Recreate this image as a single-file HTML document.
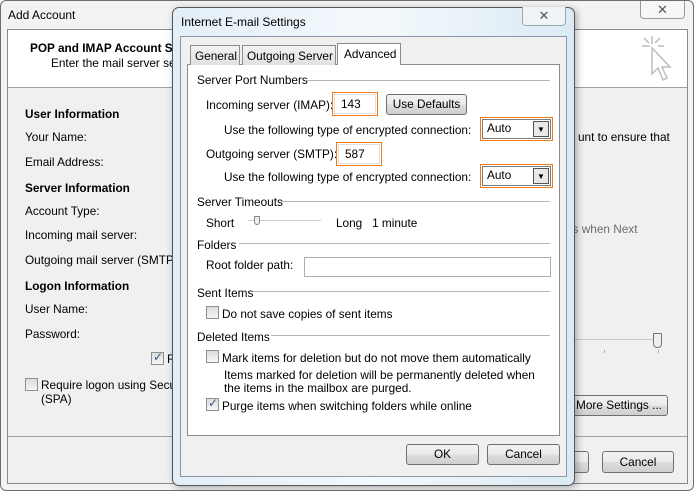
<!DOCTYPE html>
<html><head><style>
*{margin:0;padding:0;box-sizing:border-box}
body{width:694px;height:491px;overflow:hidden;background:#fff;font-family:"Liberation Sans",sans-serif;font-size:11.8px;color:#000;position:relative}
.a{position:absolute;white-space:nowrap}
.b{font-weight:bold}
.cb{position:absolute;width:13px;height:13px;border:1px solid #8e8f8f;background:linear-gradient(#dcdcdc,#f6f6f6)}
.btn{position:absolute;border:1px solid #707070;border-radius:3px;background:linear-gradient(#f2f2f2 0,#ebebeb 50%,#dddddd 51%,#cfcfcf);text-align:center}
.hr{position:absolute;height:1px;background:#b5b5b5}
.inp{position:absolute;background:#fff;border:1px solid #abadb3}
.og{position:absolute;border:1px solid #f07a1a}
.sel{position:absolute;background:#fff;border:1px solid #7a7a7a}
</style></head><body>
<div class="a" style="left:0;top:0;width:694px;height:491px;border:1px solid #6e6e6e;border-radius:6px;background:#f3f3f3"></div>
<div class="a" style="left:8px;top:8px;font-size:12px">Add Account</div>
<div class="a" style="left:640px;top:1px;width:45px;height:18px;border:1px solid #9a9a9a;border-top:none;border-radius:0 0 4px 4px;background:#f7f7f7;text-align:center;font-size:13px;color:#555;line-height:17px">✕</div>
<div class="a" style="left:7px;top:29px;width:681px;height:455px;border:1px solid #8a8a8a;background:#f0f0f0"></div>
<div class="a" style="left:8px;top:30px;width:679px;height:58px;background:#fff;border-bottom:1px solid #a0a0a0"></div>
<div class="a b" style="left:30px;top:41px">POP and IMAP Account Se</div>
<div class="a" style="left:51px;top:56px">Enter the mail server sett</div>
<svg class="a" style="left:638px;top:34px" width="36" height="50" viewBox="0 0 36 50"><g stroke="#bdbdbd" stroke-width="1.5" fill="none"><path d="M14 2v8M4 12h8M6 4l5 5M22 4l-5 5M20 12h6"/><path d="M14 14v26l6-6 5 12 4-2-5-11h8z" fill="#fff"/></g></svg>
<div class="hr" style="left:8px;top:436px;width:679px;background:#a0a0a0"></div>
<div class="a b" style="left:25px;top:107px">User Information</div>
<div class="a" style="left:25px;top:130px">Your Name:</div>
<div class="a" style="left:25px;top:155px">Email Address:</div>
<div class="a b" style="left:25px;top:181px">Server Information</div>
<div class="a" style="left:25px;top:204px">Account Type:</div>
<div class="a" style="left:25px;top:228px">Incoming mail server:</div>
<div class="a" style="left:25px;top:253px">Outgoing mail server (SMTP):</div>
<div class="a b" style="left:25px;top:279px">Logon Information</div>
<div class="a" style="left:25px;top:302px">User Name:</div>
<div class="a" style="left:25px;top:327px">Password:</div>
<div class="cb" style="left:151px;top:352px"><span style="position:absolute;left:1px;top:-3px;color:#3b4f8c;font-size:12px">✓</span></div>
<div class="a" style="left:167px;top:352px">R</div>
<div class="cb" style="left:25px;top:378px"></div>
<div class="a" style="left:41px;top:378px;line-height:14px">Require logon using Secu<br>(SPA)</div>
<div class="a" style="left:578px;top:130px">unt to ensure that</div>
<div class="a" style="left:566px;top:222px;color:#6d6d6d">gs when Next</div>
<div class="hr" style="left:575px;top:339px;width:85px;background:#c8c8c8"></div>
<div class="a" style="left:653px;top:333px;width:9px;height:15px;border:1px solid #777;border-radius:1px 1px 4px 4px;background:#eee"></div>
<div class="a" style="left:604px;top:350px;width:1px;height:3px;background:#aaa"></div>
<div class="a" style="left:658px;top:350px;width:1px;height:3px;background:#aaa"></div>
<div class="btn" style="left:570px;top:395px;width:98px;height:21px;line-height:19px">More Settings ...</div>
<div class="btn" style="left:562px;top:451px;width:27px;height:22px"></div>
<div class="btn" style="left:602px;top:451px;width:72px;height:22px;line-height:20px">Cancel</div>
<div class="a" style="left:172px;top:7px;width:403px;height:479px;border:1px solid #555;border-radius:7px;background:linear-gradient(90deg,#e3eef7,#f4f9fc 50%,#dbeaf4);box-shadow:2px 2px 8px rgba(0,0,0,.3)"></div>
<div class="a" style="left:181px;top:15px;font-size:12px">Internet E-mail Settings</div>
<div class="a" style="left:522px;top:7px;width:44px;height:19px;border:1px solid #9aa;border-top:none;border-radius:0 0 4px 4px;background:#f0f4f7;text-align:center;font-size:13px;color:#555;line-height:18px">✕</div>
<div class="a" style="left:180px;top:36px;width:387px;height:441px;border:1px solid #8a98a8;background:#f0f0f0"></div>
<div class="a" style="left:187px;top:64px;width:373px;height:372px;border:1px solid #898c95;background:#fff"></div>
<div class="a" style="left:190px;top:45px;width:50px;height:20px;border:1px solid #898c95;border-bottom:none;background:linear-gradient(#f2f2f2,#e1e1e1);padding:3px 0 0 4px">General</div>
<div class="a" style="left:242px;top:45px;width:94px;height:20px;border:1px solid #898c95;border-bottom:none;background:linear-gradient(#f2f2f2,#e1e1e1);padding:3px 0 0 4px">Outgoing Server</div>
<div class="a" style="left:337px;top:43px;width:64px;height:22px;border:1px solid #898c95;border-bottom:none;background:#fff;padding:3px 0 0 6px">Advanced</div>
<div class="a" style="left:197px;top:73px">Server Port Numbers</div><div class="hr" style="left:305px;top:80px;width:245px"></div>
<div class="a" style="left:206px;top:98px">Incoming server (IMAP):</div>
<div class="og" style="left:332px;top:92px;width:46px;height:24px"></div><div class="inp" style="left:334px;top:94px;width:42px;height:20px;padding:2px 0 0 6px;border-color:#e0e0e0">143</div>
<div class="btn" style="left:386px;top:94px;width:81px;height:21px;line-height:19px">Use Defaults</div>
<div class="a" style="left:224px;top:123px">Use the following type of encrypted connection:</div>
<div class="og" style="left:480px;top:117px;width:73px;height:24px"></div><div class="sel" style="left:482px;top:119px;width:69px;height:20px;padding:1px 0 0 4px">Auto<div class="a" style="right:1px;top:1px;width:16px;height:16px;border:1px solid #555;background:#e8e8e8;font-size:8px;text-align:center;line-height:15px">▼</div></div>
<div class="a" style="left:206px;top:147px">Outgoing server (SMTP):</div>
<div class="og" style="left:336px;top:142px;width:46px;height:24px"></div><div class="inp" style="left:338px;top:144px;width:42px;height:20px;padding:2px 0 0 6px;border-color:#e0e0e0">587</div>
<div class="a" style="left:224px;top:170px">Use the following type of encrypted connection:</div>
<div class="og" style="left:480px;top:164px;width:73px;height:24px"></div><div class="sel" style="left:482px;top:166px;width:69px;height:20px;padding:1px 0 0 4px">Auto<div class="a" style="right:1px;top:1px;width:16px;height:16px;border:1px solid #555;background:#e8e8e8;font-size:8px;text-align:center;line-height:15px">▼</div></div>
<div class="a" style="left:197px;top:195px">Server Timeouts</div><div class="hr" style="left:281px;top:201px;width:269px"></div>
<div class="a" style="left:206px;top:216px">Short</div>
<div class="hr" style="left:248px;top:220px;width:73px;background:#ccc"></div>
<div class="a" style="left:254px;top:216px;width:6px;height:9px;border:1px solid #888;border-radius:0 0 3px 3px;background:#eee"></div>
<div class="a" style="left:336px;top:216px">Long&nbsp;&nbsp;&nbsp;1 minute</div>
<div class="a" style="left:197px;top:238px">Folders</div><div class="hr" style="left:239px;top:243px;width:311px"></div>
<div class="a" style="left:206px;top:258px">Root folder path:</div>
<div class="inp" style="left:304px;top:257px;width:247px;height:20px"></div>
<div class="a" style="left:197px;top:286px">Sent Items</div><div class="hr" style="left:253px;top:291px;width:297px"></div>
<div class="cb" style="left:206px;top:306px"></div><div class="a" style="left:222px;top:307px">Do not save copies of sent items</div>
<div class="a" style="left:197px;top:330px">Deleted Items</div><div class="hr" style="left:271px;top:335px;width:279px"></div>
<div class="cb" style="left:206px;top:350px"></div><div class="a" style="left:222px;top:351px">Mark items for deletion but do not move them automatically</div>
<div class="a" style="left:224px;top:369px;line-height:13px">Items marked for deletion will be permanently deleted when<br>the items in the mailbox are purged.</div>
<div class="cb" style="left:206px;top:398px"><span style="position:absolute;left:1px;top:-3px;color:#3b4f8c;font-size:12px">✓</span></div><div class="a" style="left:222px;top:399px">Purge items when switching folders while online</div>
<div class="btn" style="left:406px;top:444px;width:73px;height:21px;line-height:19px">OK</div>
<div class="btn" style="left:487px;top:444px;width:73px;height:21px;line-height:19px">Cancel</div>
</body></html>
